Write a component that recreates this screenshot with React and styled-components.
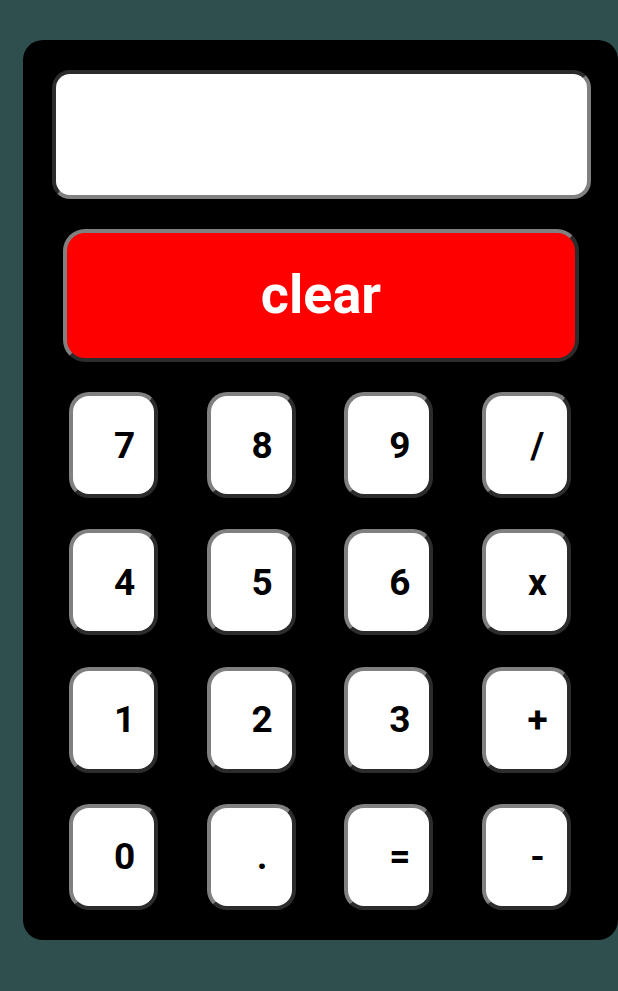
import React from "react";
import styled, { createGlobalStyle } from "styled-components";

const Global = createGlobalStyle`
  html, body {
    margin: 0;
    padding: 0;
    background: #2f4f4f;
    font-family: Roboto, "Liberation Sans", sans-serif;
  }
  body { min-height: 991px; }
`;

const Page = styled.div`
  padding: 40px 0 0 23px;
`;

const Calculator = styled.div`
  box-sizing: border-box;
  width: 595px;
  height: 900px;
  background: #000;
  border-radius: 20px;
  padding-top: 30px;
  display: flex;
  flex-direction: column;
`;

const Display = styled.div`
  box-sizing: border-box;
  height: 129px;
  margin: 0 27px 0 29px;
  background: #fff;
  border: 4px inset #808080;
  border-radius: 18px;
`;

const ClearButton = styled.button`
  box-sizing: border-box;
  height: 133px;
  margin: 30px 39px 0 40px;
  background: #ff0000;
  border: 4px outset #808080;
  border-radius: 22px;
  color: #fff;
  font-family: Roboto, "Liberation Sans", sans-serif;
  font-weight: 700;
  font-size: 54px;
  display: flex;
  align-items: center;
  justify-content: center;
  padding: 0 0 2px 0;
`;

const Keypad = styled.div`
  margin: 30px 48px 0 46px;
  display: grid;
  grid-template-columns: repeat(4, 89px);
  grid-auto-rows: 106px;
  column-gap: 48.67px;
  row-gap: 31.33px;
`;

const Key = styled.button`
  box-sizing: border-box;
  background: #fff;
  border: 4px outset #808080;
  border-radius: 20px;
  color: #000;
  font-family: Roboto, "Liberation Sans", sans-serif;
  font-weight: 700;
  font-size: 37px;
  display: flex;
  align-items: center;
  justify-content: center;
  padding: 0 0 0 22px;
`;

const keys = ["7", "8", "9", "/", "4", "5", "6", "x", "1", "2", "3", "+", "0", ".", "=", "-"];

export default function App() {
  return (
    <>
      <Global />
      <Page>
        <Calculator>
          <Display />
          <ClearButton>clear</ClearButton>
          <Keypad>
            {keys.map((k) => (
              <Key key={k}>{k}</Key>
            ))}
          </Keypad>
        </Calculator>
      </Page>
    </>
  );
}
